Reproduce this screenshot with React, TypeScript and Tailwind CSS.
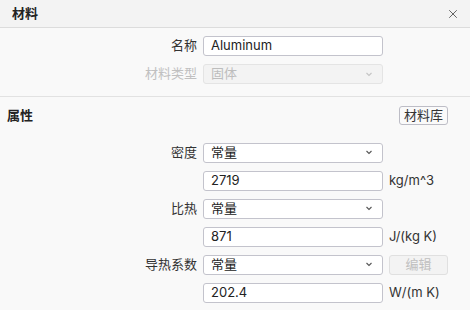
import { X } from 'lucide-react';

const font = { fontFamily: 'Inter, "Noto Sans CJK SC", sans-serif' };

function Chevron({ disabled }: { disabled?: boolean }) {
  return (
    <svg width="8" height="5" viewBox="0 0 8 5" className="shrink-0">
      <path d="M1.5 1 L4 3.5 L6.5 1" fill="none" stroke={disabled ? '#c4c4c4' : '#555'} strokeWidth="1.1" />
    </svg>
  );
}

function Select({ value, disabled }: { value: string; disabled?: boolean }) {
  return (
    <div
      className={`h-5 flex items-center justify-between pl-[7px] pr-[9px] rounded-[3px] border text-[13px] ${
        disabled ? 'bg-[#f3f3f3] border-[#e4e4e4] text-[#bdbdbd]' : 'bg-white border-[#c3c3cc] text-[#222]'
      }`}
    >
      <span>{value}</span>
      <Chevron disabled={disabled} />
    </div>
  );
}

function Input({ value }: { value: string }) {
  return (
    <div className="h-5 flex items-center px-[7px] rounded-[3px] border border-[#c3c3cc] bg-white text-[13px] text-[#222]">
      {value}
    </div>
  );
}

function Label({ text, disabled }: { text: string; disabled?: boolean }) {
  return (
    <div className={`h-5 flex items-center justify-end text-[13px] ${disabled ? 'text-[#c0c0c0]' : 'text-[#333]'}`}>
      {text}
    </div>
  );
}

function Unit({ text }: { text: string }) {
  return <div className="h-5 flex items-center text-[13px] text-[#333]">{text}</div>;
}

export default function App() {
  return (
    <div style={font} className="w-[470px] h-[310px] bg-[#f9f9f9] overflow-hidden">
      <div className="h-[28px] flex items-center justify-between pl-3 pr-[10px] bg-[#f3f3f3] border-b border-[#dcdcdc]">
        <span className="text-[13px] font-bold text-[#222]">材料</span>
        <X size={14} strokeWidth={1.4} className="text-[#444]" />
      </div>

      <div className="grid grid-cols-[197px_180px_1fr] gap-x-[6px] gap-y-2 pt-2 pb-3 border-b border-[#e2e2e2]">
        <Label text="名称" />
        <Input value="Aluminum" />
        <div />
        <Label text="材料类型" disabled />
        <Select value="固体" disabled />
        <div />
      </div>

      <div className="flex items-center justify-between pl-[7px] pr-[22px] pt-[9px]">
        <span className="text-[13px] font-bold text-[#222]">属性</span>
        <button className="h-[19px] px-1 flex items-center rounded-[3px] border border-[#bdbdc6] bg-[#fafafa] text-[13px] text-[#333]">
          材料库
        </button>
      </div>

      <div className="grid grid-cols-[197px_180px_59px] gap-x-[6px] gap-y-2 pt-[17px]">
        <Label text="密度" />
        <Select value="常量" />
        <div />
        <div />
        <Input value="2719" />
        <Unit text="kg/m^3" />
        <Label text="比热" />
        <Select value="常量" />
        <div />
        <div />
        <Input value="871" />
        <Unit text="J/(kg K)" />
        <Label text="导热系数" />
        <Select value="常量" />
        <button className="h-5 flex items-center justify-center rounded-[3px] border border-[#e0e0e0] bg-[#f3f3f3] text-[13px] text-[#c0c0c0]">
          编辑
        </button>
        <div />
        <Input value="202.4" />
        <Unit text="W/(m K)" />
      </div>
    </div>
  );
}
